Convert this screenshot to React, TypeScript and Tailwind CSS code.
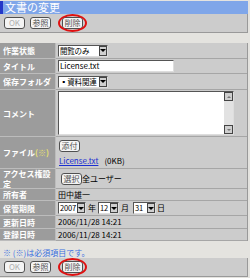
import type { ReactNode } from 'react';

function Btn({ children, dim = false }: { children: ReactNode; dim?: boolean }) {
  return (
    <span
      className={`inline-flex h-[12px] w-[21px] items-center justify-center rounded-[3px] border border-[#505050] bg-[#f4f4f4] text-[8px] leading-none ${
        dim ? 'text-[#b0b0b0]' : 'text-[#555]'
      }`}
    >
      {children}
    </span>
  );
}

function Circled({ children }: { children: ReactNode }) {
  return (
    <span className="relative inline-flex">
      {children}
      <span className="absolute -top-[3px] -bottom-[3px] -left-[4px] -right-[4px] rounded-[50%] border-2 border-[#e01010]" />
    </span>
  );
}

function ButtonBar() {
  return (
    <div className="flex h-[19px] w-[248px] items-center border-r border-b border-[#999] bg-[#cccccc] pl-[4px]">
      <Btn dim>OK</Btn>
      <span className="ml-[5px] inline-flex">
        <Btn>参照</Btn>
      </span>
      <span className="ml-[11px] inline-flex">
        <Circled>
          <Btn>削除</Btn>
        </Circled>
      </span>
    </div>
  );
}

function Select({ value, w }: { value: string; w: number }) {
  return (
    <span
      className="inline-flex h-[12px] items-center border border-t-[#555] border-l-[#555] border-r-[#ddd] border-b-[#ddd] bg-white pl-[1px] text-[7.5px] leading-none tracking-[-0.2px] text-black"
      style={{ minWidth: w }}
    >
      <span className="flex-1 pr-[1px] whitespace-nowrap">{value}</span>
      <span className="flex h-[10px] w-[8px] shrink-0 items-center justify-center border border-[#444] bg-[#d0d0d0]">
        <span className="h-0 w-0 border-x-[3px] border-t-[3px] border-x-transparent border-t-black" />
      </span>
    </span>
  );
}

function Row({ label, h, children, top = false }: { label: ReactNode; h: number; children: ReactNode; top?: boolean }) {
  return (
    <div className="flex" style={{ height: h }}>
      <div
        className={`flex w-[56px] border-b border-r border-[#bcbcbc] bg-[#9c9c9c] pl-[3px] text-[8px] leading-[9px] font-bold whitespace-nowrap text-white ${
          top ? 'items-start' : 'items-center'
        }`}
      >
        {label}
      </div>
      <div className="flex flex-1 items-center border-b border-[#a6a6a6] bg-[#cccccc] pl-[2px] text-[8px] leading-none text-black">
        {children}
      </div>
    </div>
  );
}

export default function App() {
  return (
    <div className="h-[278px] w-[250px] overflow-hidden bg-[#e4e3df] pt-[1px] font-['Noto_Sans_CJK_JP',sans-serif]">
      <div className="flex h-[13px] w-[248px] items-center border-l-[3px] border-[#2438c8] bg-[#7fa6e9] pl-[2px] text-[11px] leading-none text-white">
        文書の変更
      </div>
      <ButtonBar />

      <div className="mt-[10px] w-[248px] border-r border-[#999]">
        <Row label="作業状態" h={16}>
          <Select value="閲覧のみ" w={50} />
        </Row>
        <Row label="タイトル" h={15}>
          <span className="flex h-[12px] w-[116px] items-center border border-t-[#555] border-l-[#555] border-r-[#ddd] border-b-[#ddd] bg-white pl-[1px] text-[8px] leading-none">
            License.txt
          </span>
        </Row>
        <Row label="保存フォルダ" h={16}>
          <Select value="▪資料関連" w={50} />
        </Row>
        <Row label="コメント" h={47}>
          <div className="flex h-[44px] w-[176px] border border-t-[#555] border-l-[#555] border-r-[#ddd] border-b-[#ddd] bg-white">
            <div className="flex-1" />
            <div className="flex w-[9px] flex-col justify-between bg-[#e2e2e2]">
              <span className="flex h-[9px] items-center justify-center border border-[#444] bg-[#cfcfcf]">
                <span className="h-0 w-0 border-x-[2px] border-b-[2px] border-x-transparent border-b-[#777]" />
              </span>
              <span className="flex h-[9px] items-center justify-center border border-[#444] bg-[#cfcfcf]">
                <span className="h-0 w-0 border-x-[2px] border-t-[2px] border-x-transparent border-t-[#777]" />
              </span>
            </div>
          </div>
        </Row>
        <Row
          label={
            <span>
              ファイル<span className="text-[#e8e070]">(※)</span>
            </span>
          }
          h={32}
        >
          <div className="flex flex-col gap-[5px] pl-[1px]">
            <Btn>添付</Btn>
            <div className="flex items-center text-[8px]">
              <span className="text-[#1a2fd0] underline">License.txt</span>
              <span className="ml-[6px]">(0KB)</span>
            </div>
          </div>
        </Row>
        <Row
          label={
            <div className="flex flex-col leading-[10px]">
              <span>アクセス権設</span>
              <span>定</span>
            </div>
          }
          h={20}
          top
        >
          <span className="ml-[3px] inline-flex">
            <Btn>選択</Btn>
          </span>
          <span>全ユーザー</span>
        </Row>
        <Row label="所有者" h={12}>
          田中雄一
        </Row>
        <Row label="保管期限" h={15}>
          <Select value="2007" w={28} />
          <span className="mx-[2px]">年</span>
          <Select value="12" w={21} />
          <span className="ml-[2px] mr-[4px]">月</span>
          <Select value="31" w={23} />
          <span className="ml-[1px]">日</span>
        </Row>
        <Row label="更新日時" h={13}>
          2006/11/28 14:21
        </Row>
        <Row label="登録日時" h={12}>
          2006/11/28 14:21
        </Row>
      </div>

      <div className="mt-[7px] h-[10px] pl-[3px] text-[8px] leading-[10px] text-[#3a6fe0]">※ (※)は必須項目です。</div>
      <ButtonBar />
    </div>
  );
}
